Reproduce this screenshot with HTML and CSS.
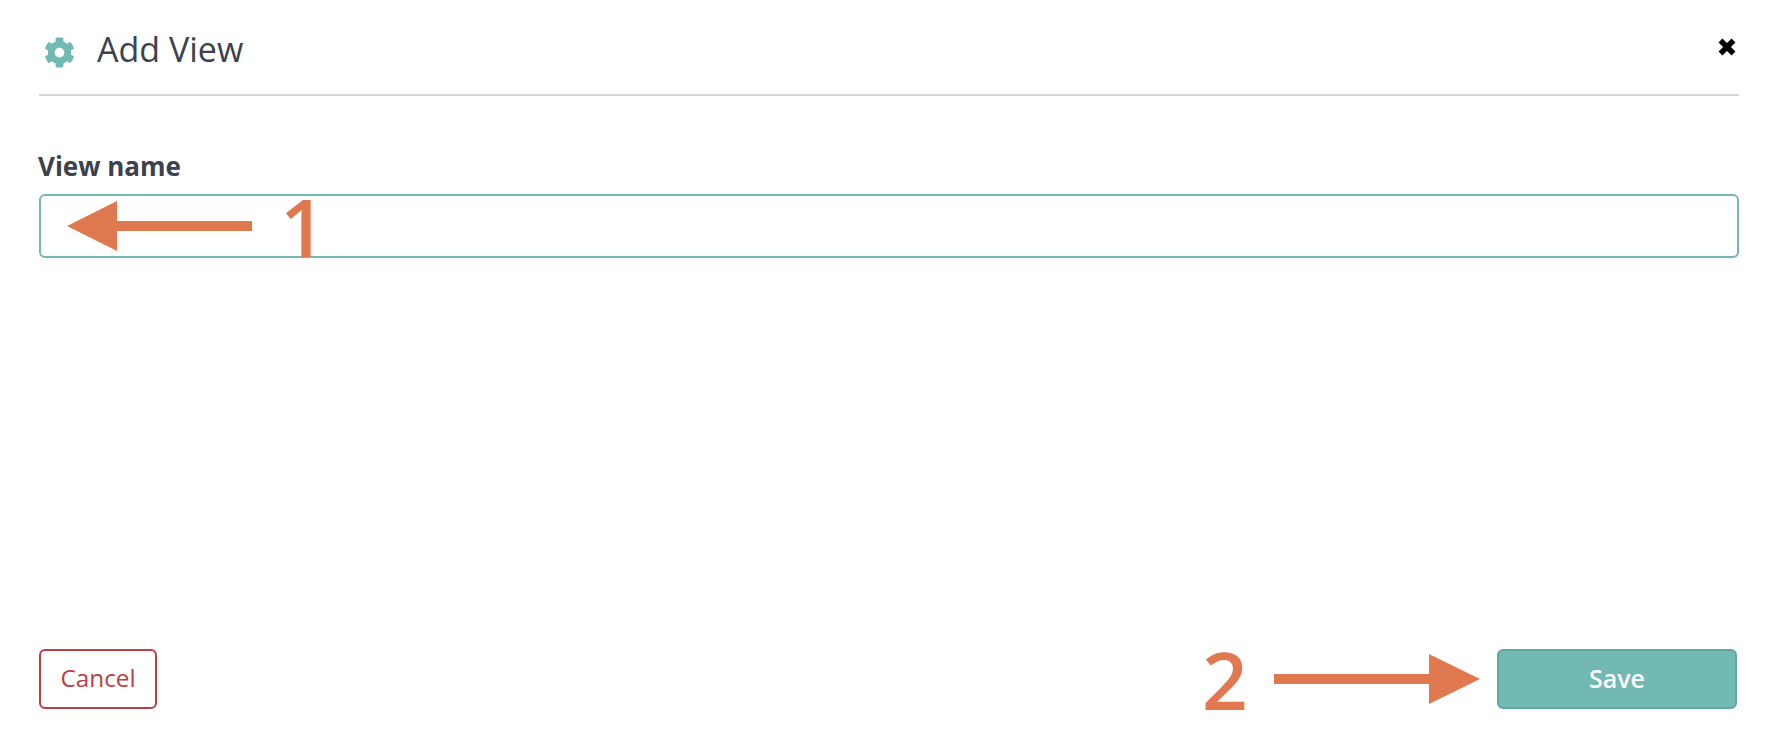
FILE: index.html
```html
<!DOCTYPE html>
<html lang="en">
<head>
    <meta charset="UTF-8">
    <title>Add View</title>
    <link rel="stylesheet" href="styles.css">
</head>
<body>
    <div id="dialog">
        <div class="header">
            <svg class="gear" viewBox="0 0 512 512"><path d="M487.4 315.7l-42.6-24.6c4.3-23.2 4.3-47 0-70.2l42.6-24.6c4.9-2.8 7.1-8.6 5.5-14-11.1-35.6-30-67.8-54.7-94.6-3.8-4.1-10-5.1-14.8-2.3L380.8 110c-17.9-15.4-38.5-27.3-60.8-35.1V25.8c0-5.6-3.9-10.5-9.4-11.7-36.7-8.2-74.3-7.8-109.2 0-5.5 1.2-9.4 6.1-9.4 11.7V75c-22.2 7.9-42.8 19.8-60.8 35.1L88.7 85.5c-4.9-2.8-11-1.9-14.8 2.3-24.7 26.7-43.6 58.9-54.7 94.6-1.7 5.4.6 11.2 5.5 14L67.3 221c-4.3 23.2-4.3 47 0 70.2l-42.6 24.6c-4.9 2.8-7.1 8.6-5.5 14 11.1 35.6 30 67.8 54.7 94.6 3.8 4.1 10 5.1 14.8 2.3l42.6-24.6c17.9 15.4 38.5 27.3 60.8 35.1v49.2c0 5.6 3.9 10.5 9.4 11.7 36.7 8.2 74.3 7.8 109.2 0 5.5-1.2 9.4-6.1 9.4-11.7v-49.2c22.2-7.9 42.8-19.8 60.8-35.1l42.6 24.6c4.9 2.8 11 1.9 14.8-2.3 24.7-26.7 43.6-58.9 54.7-94.6 1.5-5.5-.7-11.3-5.6-14.1zM256 336c-44.1 0-80-35.9-80-80s35.9-80 80-80 80 35.9 80 80-35.9 80-80 80z"/></svg>
            <h1 class="title">Add View</h1>
            <svg class="close" viewBox="0 0 20 20"><path d="M3.5 3.5L16.5 16.5M16.5 3.5L3.5 16.5"/></svg>
        </div>
        <div class="field">
            <label class="label">View name</label>
            <div class="input-wrap">
                <input type="text" class="input">
                <svg class="arrow arrow-left" viewBox="0 0 185 50"><path d="M0 25L50 0V20H185V30H50V50Z"/></svg>
                <span class="step step-one">1</span>
            </div>
        </div>
        <div class="footer">
            <button class="btn btn-cancel">Cancel</button>
            <div class="save-wrap">
                <span class="step step-two">2</span>
                <svg class="arrow arrow-right" viewBox="0 0 206 50"><path d="M206 25L155 0V20H0V30H155V50Z"/></svg>
                <button class="btn btn-save">Save</button>
            </div>
        </div>
    </div>
</body>
</html>
```

FILE: styles.css
```css
body{
    margin: 0;
    background: #fff;
    font-family: "Open Sans", sans-serif;
    color: #3a424e;
}
#dialog{
    height: 748px;
    box-sizing: border-box;
    padding: 0 40px 39px 39px;
    display: flex;
    flex-direction: column;
}
.header{
    height: 94px;
    border-bottom: 2px solid #d8d8d8;
    display: flex;
    align-items: center;
    padding: 0 2px 0 5px;
}
.gear{
    width: 31px;
    height: 31px;
    fill: #72b9b4;
    margin-top: 10px;
}
.title{
    margin: 4px 0 0 22px;
    font-size: 34px;
    font-weight: 400;
    flex: 1;
}
.close{
    width: 20px;
    height: 20px;
    fill: none;
    stroke: #000;
    stroke-width: 5.5;
}
.field{
    margin-top: 54px;
    flex: 1;
}
.label{
    display: block;
    font-size: 26px;
    font-weight: 700;
    line-height: 33px;
    margin-left: -1px;
    margin-bottom: 11px;
}
.input-wrap{
    position: relative;
}
.input{
    display: block;
    width: 100%;
    height: 64px;
    box-sizing: border-box;
    border: 2px solid #72b9b4;
    border-radius: 6px;
    outline: none;
}
.arrow{
    position: absolute;
    fill: #e07850;
}
.arrow-left{
    left: 28px;
    top: 7px;
    width: 185px;
    height: 50px;
}
.step{
    position: absolute;
    font-family: "Open Sans", sans-serif;
    font-weight: 600;
    line-height: 1;
    color: #e07850;
}
.step-one{
    left: 241px;
    top: -8px;
    font-size: 80px;
}
.footer{
    display: flex;
    justify-content: space-between;
    align-items: center;
}
.save-wrap{
    position: relative;
    margin-right: 2px;
}
.btn{
    height: 60px;
    padding-bottom: 4px;
    border-radius: 6px;
    font-family: "Open Sans", sans-serif;
    display: block;
}
.btn-cancel{
    width: 118px;
    background: #fff;
    border: 2px solid #b94045;
    color: #b94045;
    font-size: 24.3px;
}
.btn-save{
    width: 240px;
    background: #72b9b4;
    border: 2px solid #5fa9a3;
    color: #fff;
    font-size: 25px;
    font-weight: 600;
}
.step-two{
    left: -295px;
    top: -10px;
    font-size: 80px;
}
.arrow-right{
    left: -223px;
    top: 5px;
    width: 206px;
    height: 50px;
}
```
